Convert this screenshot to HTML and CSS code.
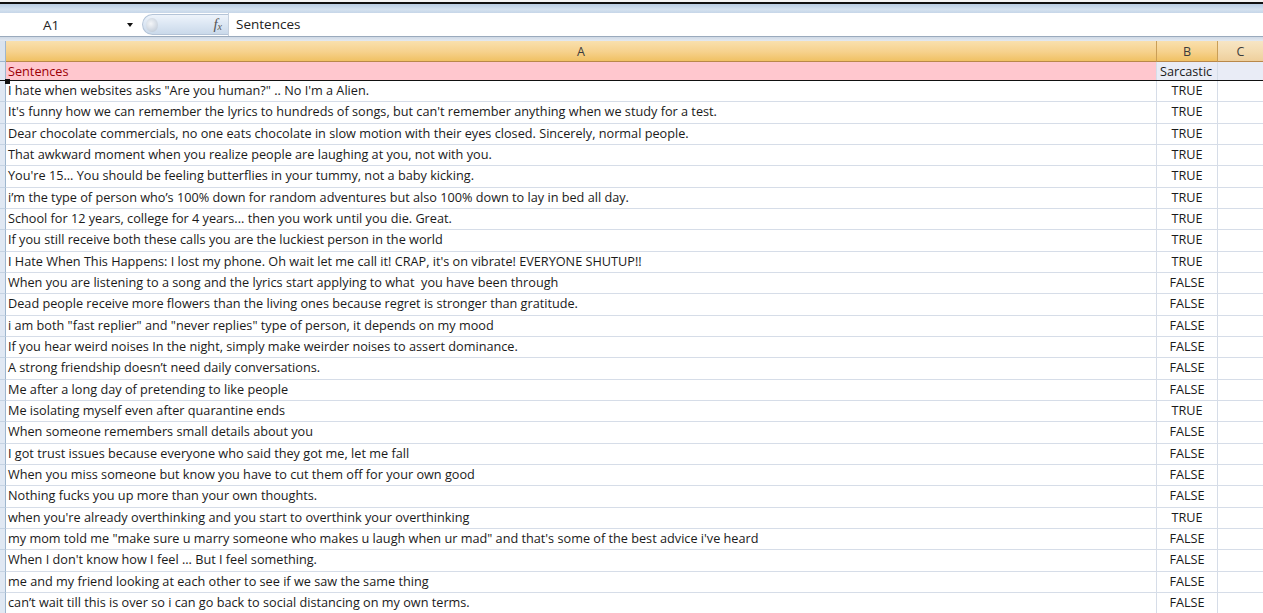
FILE: index.html
```html
<!DOCTYPE html>
<html>
<head>
<meta charset="utf-8">
<link rel="stylesheet" href="styles.css">
</head>
<body>
<div class="app">
  <div class="edge-white"></div>
  <div class="edge-black"></div>
  <div class="ribbon-edge"></div>
  <div class="formula-bar">
    <div class="name-box">A1</div>
    <div class="name-drop"><span class="tri"></span></div>
    <div class="pill">
      <span class="pill-knob"></span>
      <span class="fx">f<sub>x</sub></span>
    </div>
    <div class="formula-text">Sentences</div>
  </div>
  <div class="bar-gap"></div>
  <div class="sheet">
    <div class="row col-head">
      <div class="rh"></div>
      <div class="ch sel">A</div>
      <div class="ch sel">B</div>
      <div class="ch selc">C</div>
    </div>
    <div class="row r1">
      <div class="rh"></div>
      <div class="cell a bad">Sentences<span class="corner"></span></div>
      <div class="cell b shade">Sarcastic</div>
      <div class="cell c shade"></div>
    </div>
    <div class="row"><div class="rh"></div><div class="cell a">I hate when websites asks "Are you human?" .. No I'm a Alien.</div><div class="cell b">TRUE</div><div class="cell c"></div></div>
    <div class="row"><div class="rh"></div><div class="cell a">It's funny how we can remember the lyrics to hundreds of songs, but can't remember anything when we study for a test.</div><div class="cell b">TRUE</div><div class="cell c"></div></div>
    <div class="row"><div class="rh"></div><div class="cell a">Dear chocolate commercials, no one eats chocolate in slow motion with their eyes closed. Sincerely, normal people.</div><div class="cell b">TRUE</div><div class="cell c"></div></div>
    <div class="row"><div class="rh"></div><div class="cell a">That awkward moment when you realize people are laughing at you, not with you.</div><div class="cell b">TRUE</div><div class="cell c"></div></div>
    <div class="row"><div class="rh"></div><div class="cell a">You're 15... You should be feeling butterflies in your tummy, not a baby kicking.</div><div class="cell b">TRUE</div><div class="cell c"></div></div>
    <div class="row"><div class="rh"></div><div class="cell a">i’m the type of person who’s 100% down for random adventures but also 100% down to lay in bed all day.</div><div class="cell b">TRUE</div><div class="cell c"></div></div>
    <div class="row"><div class="rh"></div><div class="cell a">School for 12 years, college for 4 years... then you work until you die. Great.</div><div class="cell b">TRUE</div><div class="cell c"></div></div>
    <div class="row"><div class="rh"></div><div class="cell a">If you still receive both these calls you are the luckiest person in the world</div><div class="cell b">TRUE</div><div class="cell c"></div></div>
    <div class="row"><div class="rh"></div><div class="cell a">I Hate When This Happens: I lost my phone. Oh wait let me call it! CRAP, it's on vibrate! EVERYONE SHUTUP!!</div><div class="cell b">TRUE</div><div class="cell c"></div></div>
    <div class="row"><div class="rh"></div><div class="cell a">When you are listening to a song and the lyrics start applying to what  you have been through</div><div class="cell b">FALSE</div><div class="cell c"></div></div>
    <div class="row"><div class="rh"></div><div class="cell a">Dead people receive more flowers than the living ones because regret is stronger than gratitude.</div><div class="cell b">FALSE</div><div class="cell c"></div></div>
    <div class="row"><div class="rh"></div><div class="cell a">i am both "fast replier" and "never replies" type of person, it depends on my mood</div><div class="cell b">FALSE</div><div class="cell c"></div></div>
    <div class="row"><div class="rh"></div><div class="cell a">If you hear weird noises In the night, simply make weirder noises to assert dominance.</div><div class="cell b">FALSE</div><div class="cell c"></div></div>
    <div class="row"><div class="rh"></div><div class="cell a">A strong friendship doesn’t need daily conversations.</div><div class="cell b">FALSE</div><div class="cell c"></div></div>
    <div class="row"><div class="rh"></div><div class="cell a">Me after a long day of pretending to like people</div><div class="cell b">FALSE</div><div class="cell c"></div></div>
    <div class="row"><div class="rh"></div><div class="cell a">Me isolating myself even after quarantine ends</div><div class="cell b">TRUE</div><div class="cell c"></div></div>
    <div class="row"><div class="rh"></div><div class="cell a">When someone remembers small details about you</div><div class="cell b">FALSE</div><div class="cell c"></div></div>
    <div class="row"><div class="rh"></div><div class="cell a">I got trust issues because everyone who said they got me, let me fall</div><div class="cell b">FALSE</div><div class="cell c"></div></div>
    <div class="row"><div class="rh"></div><div class="cell a">When you miss someone but know you have to cut them off for your own good</div><div class="cell b">FALSE</div><div class="cell c"></div></div>
    <div class="row"><div class="rh"></div><div class="cell a">Nothing fucks you up more than your own thoughts.</div><div class="cell b">FALSE</div><div class="cell c"></div></div>
    <div class="row"><div class="rh"></div><div class="cell a">when you're already overthinking and you start to overthink your overthinking</div><div class="cell b">TRUE</div><div class="cell c"></div></div>
    <div class="row"><div class="rh"></div><div class="cell a">my mom told me "make sure u marry someone who makes u laugh when ur mad" and that's some of the best advice i've heard</div><div class="cell b">FALSE</div><div class="cell c"></div></div>
    <div class="row"><div class="rh"></div><div class="cell a">When I don't know how I feel ... But I feel something.</div><div class="cell b">FALSE</div><div class="cell c"></div></div>
    <div class="row"><div class="rh"></div><div class="cell a">me and my friend looking at each other to see if we saw the same thing</div><div class="cell b">FALSE</div><div class="cell c"></div></div>
    <div class="row"><div class="rh"></div><div class="cell a">can’t wait till this is over so i can go back to social distancing on my own terms.</div><div class="cell b">FALSE</div><div class="cell c"></div></div>
  </div>
</div>
</body>
</html>
```
FILE: styles.css
```css
html, body {
  margin: 0;
  padding: 0;
  background: #ffffff;
}
body {
  font-family: "Open Sans", "Liberation Sans", sans-serif;
  font-size: 12.7px;
  color: #1a1a1a;
  overflow: hidden;
}
.app {
  width: 1263px;
  height: 613px;
  overflow: hidden;
}
.edge-white { height: 2px; background: #f4f4f4; }
.edge-black { height: 2px; background: #111111; }
.ribbon-edge {
  height: 9px;
  background: linear-gradient(#b9cde3, #d5e2f0 60%, #c6d6e8);
}
.formula-bar {
  height: 23px;
  display: flex;
  align-items: center;
  background: #ffffff;
  border-bottom: 1px solid #9aaabd;
}
.name-box {
  width: 118px;
  padding-left: 43px;
  box-sizing: border-box;
  font-size: 13.5px;
  color: #222;
}
.name-drop {
  width: 24px;
  display: flex;
  justify-content: center;
}
.tri {
  width: 0;
  height: 0;
  border-left: 3.5px solid transparent;
  border-right: 3.5px solid transparent;
  border-top: 4px solid #111;
}
.pill {
  width: 86px;
  height: 21px;
  margin-left: 0;
  box-sizing: border-box;
  border: 1px solid #b4c4d8;
  border-right: none;
  border-radius: 11px 0 0 11px;
  background: linear-gradient(#eef4fb, #dbe6f3 50%, #cad9ea);
  display: flex;
  align-items: center;
  justify-content: space-between;
  padding: 0 6px 0 3px;
}
.pill-knob {
  width: 12px;
  height: 14px;
  border-radius: 50%;
  background: radial-gradient(circle at 40% 40%, #f4f6f9, #c9d2dd 70%, #aeb9c6);
}
.fx {
  font-family: "Liberation Serif", serif;
  font-style: italic;
  font-size: 15px;
  color: #555;
  line-height: 1;
}
.fx sub {
  font-size: 10px;
  vertical-align: -1px;
}
.formula-text {
  flex: 1;
  height: 23px;
  line-height: 23px;
  padding-left: 7px;
  border-left: 1px solid #c5d0de;
  font-size: 13.5px;
  color: #222;
}
.bar-gap {
  height: 4px;
  background: linear-gradient(#cfd9e5, #e3e9f1);
}
.sheet {
  display: flex;
  flex-direction: column;
}
.row {
  display: grid;
  grid-template-columns: 6px 1151px 61px 45px;
  height: 21.33px;
  box-sizing: border-box;
}
.rh {
  background: #e0e8f3;
  border-right: 1px solid #9eb6ce;
  border-bottom: 1px solid #c5d3e3;
  box-sizing: border-box;
}
.col-head {
  height: 21px;
}
.col-head .rh {
  background: #dae3ee;
  border-bottom: 1px solid #9eb6ce;
}
.ch {
  display: flex;
  align-items: center;
  justify-content: center;
  color: #3b3b3b;
  font-size: 12.5px;
  box-sizing: border-box;
  border-right: 1px solid #c99e57;
  border-bottom: 1px solid #b9884a;
}
.ch.sel {
  background: linear-gradient(#f9e0ae, #f6d18c 55%, #f0c163);
}
.ch.selc {
  background: linear-gradient(#f7e5c4, #f3dbb0 55%, #eecf9c);
  border-right: none;
}
.r1 {
  height: 19px;
  border-bottom: 2px solid #111;
}
.r1 .rh { border-bottom: none; }
.cell {
  box-sizing: border-box;
  border-bottom: 1px solid #d6dde8;
  white-space: pre;
  overflow: visible;
  line-height: 19px;
}
.cell.a {
  padding-left: 2px;
  border-right: 1px solid #d6dde8;
  position: relative;
}
.cell.b {
  text-align: center;
  border-right: 1px solid #d6dde8;
}
.r1 .cell { border-bottom: none; line-height: 18px; }
.bad {
  background: #ffc7ce;
  color: #9c0006;
}
.shade {
  background: #e9ecf6;
  color: #1a1a1a;
}
.r1 .cell.b { text-align: left; padding-left: 3px; }
.corner {
  position: absolute;
  left: -1px;
  bottom: -4px;
  width: 5px;
  height: 5px;
  background: #111;
}
```
